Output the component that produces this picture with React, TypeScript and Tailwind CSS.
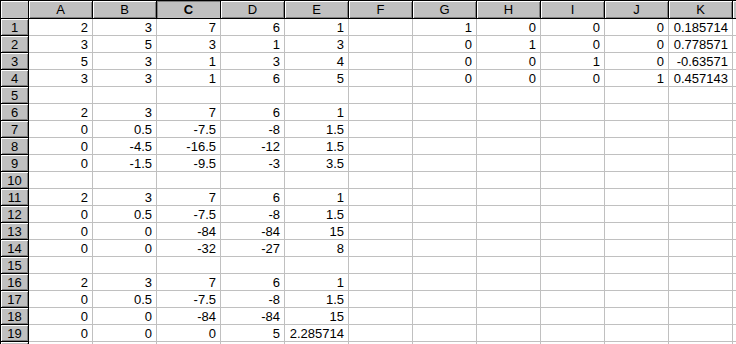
const columns = ["A", "B", "C", "D", "E", "F", "G", "H", "I", "J", "K"];

const rows: (string | number)[][] = [
  [2, 3, 7, 6, 1, "", 1, 0, 0, 0, 0.185714],
  [3, 5, 3, 1, 3, "", 0, 1, 0, 0, 0.778571],
  [5, 3, 1, 3, 4, "", 0, 0, 1, 0, -0.63571],
  [3, 3, 1, 6, 5, "", 0, 0, 0, 1, 0.457143],
  [],
  [2, 3, 7, 6, 1],
  [0, 0.5, -7.5, -8, 1.5],
  [0, -4.5, -16.5, -12, 1.5],
  [0, -1.5, -9.5, -3, 3.5],
  [],
  [2, 3, 7, 6, 1],
  [0, 0.5, -7.5, -8, 1.5],
  [0, 0, -84, -84, 15],
  [0, 0, -32, -27, 8],
  [],
  [2, 3, 7, 6, 1],
  [0, 0.5, -7.5, -8, 1.5],
  [0, 0, -84, -84, 15],
  [0, 0, 0, 5, 2.285714],
];

export default function App() {
  return (
    <div className="h-[344px] w-[736px] overflow-hidden bg-white font-['Liberation_Sans',Arial,sans-serif] text-[13px] leading-none text-black">
      <div className="grid grid-cols-[28px_repeat(11,64px)_1fr] grid-rows-[18px_repeat(20,17px)] border-l border-t border-black">
        <div className="border-b border-r border-black bg-[#c0c0c0] shadow-[inset_1px_1px_0_#fff]" />
        {columns.map((c) =>
          c === "C" ? (
            <div
              key={c}
              className="flex items-center justify-center border-b border-r border-black bg-[#c0c0c0] font-bold shadow-[inset_1px_1px_0_#808080]"
            >
              {c}
            </div>
          ) : (
            <div
              key={c}
              className="flex items-center justify-center border-b border-r border-black bg-[#c0c0c0] shadow-[inset_1px_1px_0_#fff,inset_-1px_-1px_0_#808080]"
            >
              {c}
            </div>
          )
        )}
        <div className="border-b border-black bg-[#c0c0c0] shadow-[inset_1px_1px_0_#fff]" />

        {rows.map((row, r) => (
          <Row key={r} label={String(r + 1)} values={row} />
        ))}
        {/* row 20 is only a sliver at the bottom edge */}
        <Row label="" values={[]} />
      </div>
    </div>
  );
}

function Row({ label, values }: { label: string; values: (string | number)[] }) {
  return (
    <>
      <div className="flex items-center justify-center border-b border-r border-black bg-[#c0c0c0] shadow-[inset_1px_1px_0_#fff,inset_-1px_-1px_0_#808080]">
        {label}
      </div>
      {columns.map((c, i) => (
        <div
          key={c}
          className="flex items-center justify-end border-b border-r border-[#c0c0c0] pr-[4px]"
        >
          {values[i] === undefined ? "" : String(values[i])}
        </div>
      ))}
      <div className="border-b border-[#c0c0c0]" />
    </>
  );
}
